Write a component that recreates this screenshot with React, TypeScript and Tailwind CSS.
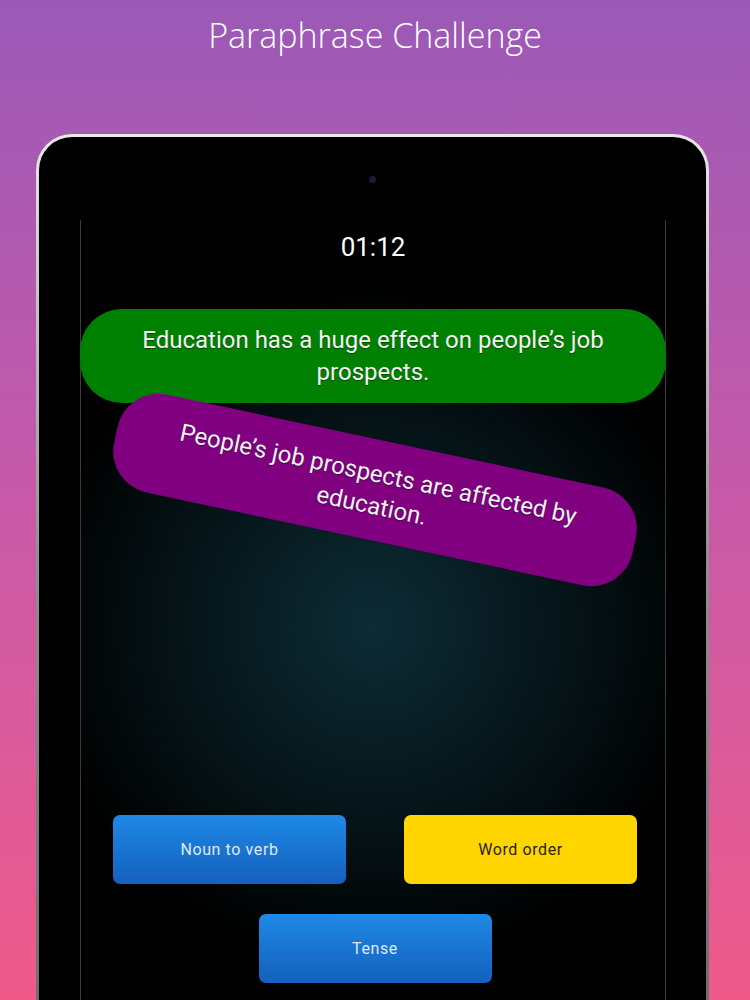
import React from 'react';

const roboto = "font-['Roboto',sans-serif]";

function Choice({ label, tone }: { label: string; tone: 'blue' | 'yellow' }) {
  const toneClass =
    tone === 'blue'
      ? 'bg-linear-to-b from-[#1f89e6] to-[#1560bd] text-[#dfe9f5]'
      : 'bg-[#ffd600] text-[#2a2410]';
  return (
    <button
      className={`w-[233px] h-[69px] rounded-[7px] flex items-center justify-center text-[16px] tracking-[0.6px] ${roboto} ${toneClass}`}
    >
      {label}
    </button>
  );
}

export default function App() {
  return (
    <div className="w-[750px] h-[1000px] overflow-hidden flex flex-col bg-linear-to-b from-[#9b59b7] via-[#c759a8] to-[#f05a8a]">
      {/* Title */}
      <h1 className="pt-[17px] h-[53px] text-center text-white font-light text-[34px] leading-[36px] font-['Open_Sans',sans-serif]">
        Paraphrase Challenge
      </h1>

      {/* Tablet frame */}
      <div className="mt-[81px] ml-[36px] w-[673px] flex-1 rounded-t-[36px] bg-linear-to-b from-[#e8e8e8] via-[#8f8f8f] to-[#6f6f6f] px-[3px] pt-[3px] flex flex-col">
        <div className="flex-1 bg-black rounded-t-[33px] flex flex-col">
          {/* Camera */}
          <div className="mt-[39px] mx-auto w-[7px] h-[7px] rounded-full bg-[#1b1b3c]" />

          {/* Screen */}
          <div className="mt-[37px] ml-[41px] w-[586px] flex-1 border-x border-[#3b3b3b] flex flex-col items-center bg-[radial-gradient(circle_at_50%_52%,#0d2c35_0%,#06161b_35%,#000_68%)]">
            <div className={`mt-[13px] h-[28px] leading-[28px] text-[26px] text-white ${roboto}`}>01:12</div>

            <div className={`mt-[48px] -mx-px w-[calc(100%+2px)] h-[94px] rounded-[42px] bg-[#008000] flex items-center justify-center text-center text-[24px] leading-[32px] text-[#f4f4f4] [text-shadow:0_1px_1px_rgba(0,0,0,0.45)] ${roboto}`}>
              <p>
                Education has a huge effect on people’s job
                <br />
                prospects.
              </p>
            </div>

            <div className={`relative mt-[37px] ml-[4px] w-[530px] h-[100px] rounded-[42px] bg-[#800080] rotate-12 flex items-center justify-center text-center text-[24px] leading-[32px] text-[#f4f4f4] [text-shadow:0_1px_1px_rgba(0,0,0,0.45)] ${roboto}`}>
              <p>
                People’s job prospects are affected by
                <br />
                education.
              </p>
            </div>

            <div className="mt-[275px] w-full flex justify-between pl-[32px] pr-[28px]">
              <Choice label="Noun to verb" tone="blue" />
              <Choice label="Word order" tone="yellow" />
            </div>

            <div className="mt-[30px] w-full flex justify-center pl-[4px]">
              <Choice label="Tense" tone="blue" />
            </div>
          </div>
        </div>
      </div>
    </div>
  );
}
